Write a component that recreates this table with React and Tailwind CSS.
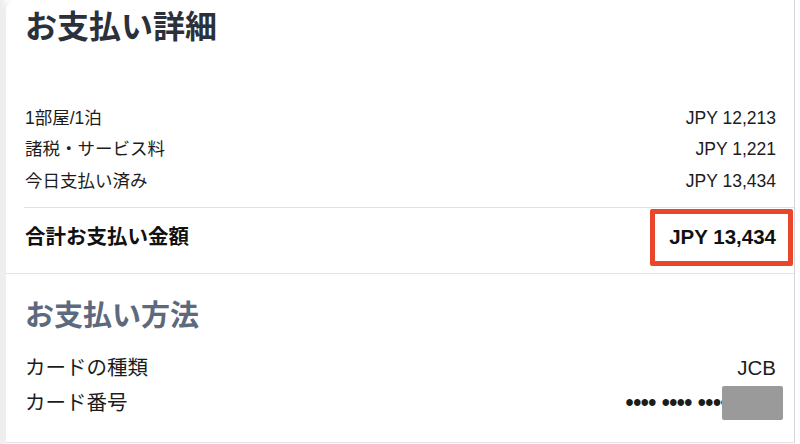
import React from 'react'

// ================================================================
// DATA
// ================================================================
const charges = [
  { label: '1部屋/1泊', value: 'JPY 12,213' },
  { label: '諸税・サービス料', value: 'JPY 1,221' },
  { label: '今日支払い済み', value: 'JPY 13,434' },
]

const font = { fontFamily: '"Liberation Sans", "Noto Sans CJK JP", sans-serif' }

// ================================================================
// PAYMENT DETAILS SECTION
// ================================================================
const PaymentDetails = () => (
  <section className="border-b border-[#e3e3e8]">
    <h1 className="pl-[19px] pt-[10px] text-[32px] leading-[38px] font-bold text-[#2b303b]">
      お支払い詳細
    </h1>

    <div className="mt-[56px] pl-[19px] pr-[18px] mb-[10.5px]">
      {charges.map((c) => (
        <div key={c.label} className="flex justify-between items-center h-[31.5px] text-[17.5px] text-[#1c1c1c]">
          <span>{c.label}</span>
          <span>{c.value}</span>
        </div>
      ))}
    </div>

    <div className="ml-[18px] border-t border-[#e2e2e2]">
      <div className="relative flex justify-between items-center h-[65px] pb-[6px] pl-[1px] pr-[18px] text-[20.5px] font-bold text-[#111]">
        <span>合計お支払い金額</span>
        <span>JPY 13,434</span>
        {/* annotation highlight */}
        <div className="absolute right-[1px] top-[1px] w-[143px] h-[57px] border-[5px] border-[#e8472b] rounded-[2px]" />
      </div>
    </div>
  </section>
)

// ================================================================
// PAYMENT METHOD SECTION
// ================================================================
const PaymentMethod = () => (
  <section className="border-b border-[#e3e3e8] pl-[19px] pr-[18px] pt-[24px] pb-[21px]">
    <h2 className="text-[29px] leading-[36px] font-bold text-[#5d697c]">お支払い方法</h2>
    <div className="mt-[17px] text-[20.5px] text-[#1c1c1c]">
      <div className="flex justify-between items-center h-[35px]">
        <span>カードの種類</span>
        <span>JCB</span>
      </div>
      <div className="relative flex justify-between items-center h-[35px]">
        <span>カード番号</span>
        <span className="pr-[48px] text-[23px] font-bold tracking-[-0.5px]">•••• •••• ••••</span>
        {/* redacted digits */}
        <div className="absolute right-[-7px] top-[0px] w-[61px] h-[34px] bg-[#9a9a9a] rounded-[2px]" />
      </div>
    </div>
  </section>
)

// ================================================================
// MAIN APP COMPONENT
// ================================================================
function App() {
  return (
    <div
      className="w-[800px] h-[444px] overflow-hidden bg-[linear-gradient(to_right,#ececec,#f6f6f6_5px,#ffffff_8px)]"
      style={font}
    >
      <div className="ml-[6px] w-[789px] -mt-[2px] bg-white rounded-tl-[14px] border-r border-[#d6d6de] shadow-[-2px_0_4px_rgba(0,0,0,0.05)]">
        <PaymentDetails />
        <PaymentMethod />
      </div>
    </div>
  )
}

export default App
